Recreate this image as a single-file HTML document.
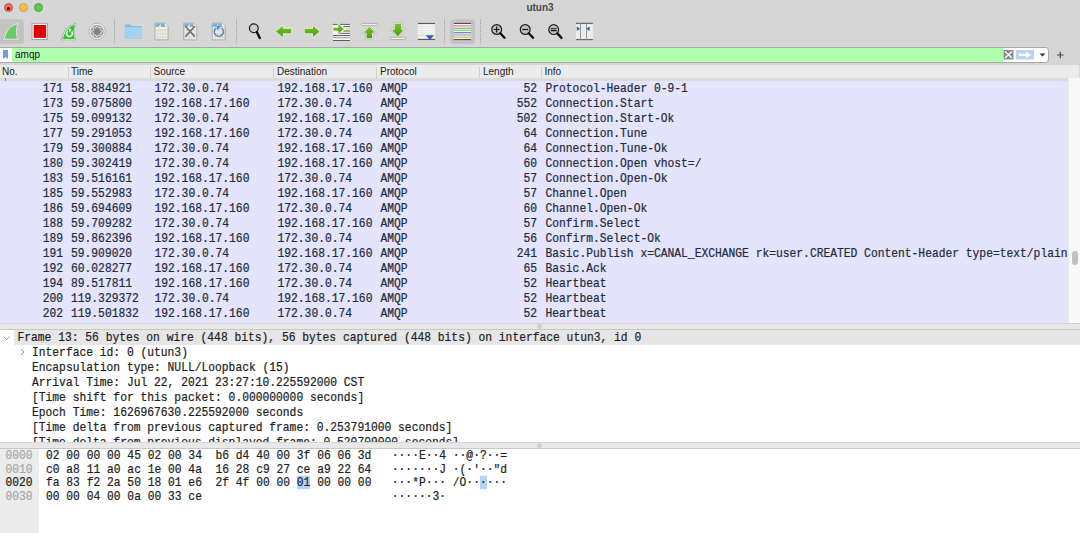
<!DOCTYPE html>
<html><head><meta charset="utf-8">
<style>
*{margin:0;padding:0;box-sizing:border-box}
html,body{width:1080px;height:533px;overflow:hidden;background:#fff}
body{position:relative;font-family:"Liberation Sans",sans-serif}
.abs{position:absolute}
#top{position:absolute;left:0;top:0;width:1080px;height:64px;background:#d6d6d6}
.tl{position:absolute;top:3px;width:9px;height:9px;border-radius:50%}
#title{position:absolute;left:0;width:1080px;top:1.5px;text-align:center;font-size:10px;color:#4a4a4a;font-weight:bold}
#filter{position:absolute;left:0;top:47px;width:1049px;height:16px;border:1px solid #a9a9a9;border-left:none;border-radius:0 4px 4px 0;background:#fff}
#fgreen{position:absolute;left:12px;top:0;width:991px;height:14px;background:#afffaf}
#ftext{position:absolute;left:15px;top:48.5px;font-size:10px;color:#111}
#hdr{position:absolute;left:0;top:63px;width:1080px;border-right:1px solid #d8d8d8;height:15px;background:#ebebeb;border-top:2px solid #d6d6d6}
#hdrb{position:absolute;left:0;top:78px;width:1068px;height:3px;background:#dcdcdc}
#hdr span{position:absolute;top:1px;font-size:10px;color:#222}
.sep{position:absolute;top:2px;width:1px;height:12px;background:#cfcfcf}
#plist{position:absolute;left:0;top:81px;width:1068px;height:242px;background:#e4e4fc}
.r span,.h span,.d i{transform:scaleY(1.13);transform-origin:0 11px}
.d i{display:inline-block;font-style:normal}
.r,.d,.h{-webkit-text-stroke:0.2px currentColor}
.mono{font-family:"Liberation Mono",monospace}
.r{position:absolute;left:0;width:1068px;height:15px;font-family:"Liberation Mono",monospace;font-size:11.3px;line-height:15px;color:#1e2b3a;white-space:pre}
.r span{position:absolute;top:0.7px}
.no{right:1005px;text-align:right}
.tm{left:71px}
.src{left:154.5px}
.dst{left:277.5px}
.pr{left:380.5px}
.ln{right:531px;text-align:right}
.inf{left:545.5px}
#vscroll{position:absolute;left:1068px;top:78px;width:12px;height:245px;background:#f9f9f9;border-left:1px solid #ececec}
#thumb{position:absolute;left:3px;top:173px;width:6px;height:14px;border-radius:3px;background:#c2c2c2}
#split1{position:absolute;left:0;top:323px;width:1080px;height:7px;background:#e8e8e8;border-top:1px solid #d2d2d2;border-bottom:1px solid #c8c8c8}
#details{position:absolute;left:0;top:330px;width:1080px;height:113px;background:#fff;overflow:hidden}
.d{position:absolute;height:15px;padding-top:1px;font-family:"Liberation Mono",monospace;font-size:11.3px;line-height:15px;color:#1e1e1e;white-space:pre}
.d0{left:13.5px;width:1066.5px;background:#e6e6e6;padding-left:4px;padding-top:1px}
.d1{left:32px}
.d2{left:32px}
#split2{position:absolute;left:0;top:442px;width:1080px;height:6.5px;border-top:1px solid #d6d6d6;background:#e8e8e8;border-bottom:1px solid #c8c8c8}
#hexp{position:absolute;left:0;top:449px;width:1080px;height:84px;background:#fff}
#gutter{position:absolute;left:0;top:449px;width:39px;height:84px;background:#ececec}
.h{position:absolute;left:0;width:1080px;height:14px;font-family:"Liberation Mono",monospace;font-size:11.3px;line-height:14px;color:#1e1e1e;white-space:pre}
.h span{position:absolute;top:1.3px}
.off{left:5.4px;color:#a8a8a8}
.off.sel{color:#1e1e1e}
.hx{left:46px}
.asc{left:391.8px}
.h b{font-weight:normal;background:#b3d4fa}
</style></head><body>
<div id="top"></div>
<div class="tl" style="left:3.5px;background:#ec6a5e;border:0.5px solid #d05248"></div><div class="tl" style="left:7px;top:6.5px;width:3px;height:3px;background:#4d0000"></div>
<div class="tl" style="left:18.5px;background:#f4bf4f;border:0.5px solid #d6a13c"></div>
<div class="tl" style="left:33.5px;background:#61c554;border:0.5px solid #4da63f"></div>
<div id="title">utun3</div>

<!-- TOOLBAR -->
<svg class="abs" style="left:0;top:17px" width="600" height="30" viewBox="0 17 600 30">
 <defs>
  <linearGradient id="gg" x1="0" y1="0" x2="0" y2="1"><stop offset="0" stop-color="#7cc52a"/><stop offset="1" stop-color="#4a9c0c"/></linearGradient>
  <g id="doc">
   <path d="M0.5 0.5 H10.3 L13.5 3.7 V17.2 H0.5 Z" fill="#eeeee4" stroke="#a4a49c" stroke-width="0.9"/>
   <path d="M1 1 H10.1 L13 3.9 V4.3 H1 Z" fill="#74b4de"/>
   <path d="M10.3 0.6 V3.7 H13.4 Z" fill="#fafafa"/>
   <path d="M4.6 4.3 C4.8 2.8 5.6 1.8 6.6 1.5 C6.1 2.4 6.1 3.4 6.5 4.3 Z" fill="#f4f4f4"/>
   <g fill="#d4d4ca">
    <rect x="2.5" y="6.5" width="1.6" height="2.2"/><rect x="5" y="6.5" width="1.6" height="2.2"/><rect x="7.5" y="6.5" width="1.6" height="2.2"/><rect x="10" y="6.5" width="1.6" height="2.2"/>
    <rect x="2.5" y="10" width="1.6" height="2.2"/><rect x="5" y="10" width="1.6" height="2.2"/><rect x="7.5" y="10" width="1.6" height="2.2"/><rect x="10" y="10" width="1.6" height="2.2"/>
    <rect x="2.5" y="13.5" width="1.6" height="2.2"/><rect x="5" y="13.5" width="1.6" height="2.2"/><rect x="7.5" y="13.5" width="1.6" height="2.2"/><rect x="10" y="13.5" width="1.6" height="2.2"/>
   </g>
  </g>
 </defs>
 <!-- selected bg -->
 <rect x="-4" y="19" width="27.8" height="24.8" rx="3" fill="#c3c3c3"/>
 <!-- shark fin -->
 <path d="M4.3 39.2 C5.5 31 10.5 25 18.2 23.6 C15.8 28.5 15.8 34.5 18 39.2 Z" fill="#6bcb65" stroke="#ececec" stroke-width="0.9" stroke-linejoin="round"/>
 <!-- stop -->
 <rect x="32" y="23.3" width="15.4" height="16.2" fill="#fbfbfb" stroke="#9c9c9c" stroke-width="0.9"/>
 <rect x="33.7" y="25" width="12.4" height="12.9" fill="#dd0000"/>
 <!-- restart fin -->
 <path d="M61 40.2 C62.2 31.5 67.5 24.5 76.6 22.8 C74.3 28.5 74.3 35 76.5 40.2 Z" fill="#a9a9a9"/>
 <path d="M62.2 39.5 C63.4 31.8 68.2 25.5 75.6 24 C73.6 29 73.6 35 75.5 39.5 Z" fill="#fafafa"/>
 <path d="M63 39 C64.2 32 68.7 26.2 75 24.8 C73.2 29.5 73.2 35 74.9 39 Z" fill="#22cc22"/>
 <path d="M71.6 31.6 A2.9 2.9 0 1 1 68.2 30.9" fill="none" stroke="#f4f4f4" stroke-width="1.6"/>
 <path d="M68.3 28.6 L71.6 28.9 L69.6 32.6 Z" fill="#f4f4f4"/>
 <!-- gear -->
 <circle cx="97.1" cy="31.4" r="8.2" fill="#f0f0f0" stroke="#aaaaaa" stroke-width="0.8"/>
 <circle cx="97.1" cy="31.4" r="6.5" fill="#969696"/>
 <path d="M96.57 26.03 L97.63 26.03 L98.26 27.57 L98.99 27.87 L100.53 27.23 L101.27 27.97 L100.63 29.51 L100.93 30.24 L102.47 30.87 L102.47 31.93 L100.93 32.56 L100.63 33.29 L101.27 34.83 L100.53 35.57 L98.99 34.93 L98.26 35.23 L97.63 36.77 L96.57 36.77 L95.94 35.23 L95.21 34.93 L93.67 35.57 L92.93 34.83 L93.57 33.29 L93.27 32.56 L91.73 31.93 L91.73 30.87 L93.27 30.24 L93.57 29.51 L92.93 27.97 L93.67 27.23 L95.21 27.87 L95.94 27.57 Z" fill="#8c8c8c" stroke="#f2f2f2" stroke-width="0.8" stroke-linejoin="round"/>
 <circle cx="97.1" cy="31.4" r="2.4" fill="#808080"/>
 <!-- sep -->
 <line x1="114.5" y1="19" x2="114.5" y2="43.5" stroke="#a0a0a0" stroke-width="1" stroke-dasharray="1 1"/>
 <!-- folder -->
 <path d="M124.8 24.6 h6 l0.6 1.4 h10.1 v12.8 h-16.7 z" fill="#86bde2"/>
 <rect x="124.8" y="27.2" width="16.7" height="11.6" rx="0.5" fill="#a6d3ec"/>
 <!-- docs -->
 <use href="#doc" x="154.5" y="22.7"/>
 <use href="#doc" x="183.3" y="22.7"/>
 <path d="M185.4 26.3 L194.8 36.6 M194.8 26.3 L185.4 36.6" stroke="#6e6e6e" stroke-width="1.6"/>
 <use href="#doc" x="211.7" y="22.7"/>
 <path d="M221.3 27.8 A4.6 4.6 0 1 1 215.8 28.2" fill="none" stroke="#6486bd" stroke-width="1.6"/>
 <path d="M216.5 25.3 L220.5 27.6 L216.8 30.3 Z" fill="#6486bd"/>
 <!-- sep -->
 <line x1="236.5" y1="19" x2="236.5" y2="43.5" stroke="#a0a0a0" stroke-width="1" stroke-dasharray="1 1"/>
 <!-- find -->
 <circle cx="253.8" cy="28.3" r="4.4" fill="#cdcdcd" stroke="#1a1a1a" stroke-width="1.2"/>
 <path d="M256.8 32 L259.8 38" stroke="#111" stroke-width="2.4" stroke-linecap="round"/>
 <!-- back arrow -->
 <path d="M275.4 31.5 L283.3 24.8 V28.3 H291.7 V33.8 H283.3 V38 Z" fill="url(#gg)" stroke="#eeeeee" stroke-width="0.9" stroke-linejoin="round"/>
 <!-- forward arrow -->
 <path d="M320 31.5 L312.5 24.8 V28.3 H304.2 V33.8 H312.5 V38 Z" fill="url(#gg)" stroke="#eeeeee" stroke-width="0.9" stroke-linejoin="round"/>
 <!-- go to packet -->
 <rect x="333" y="24.4" width="17" height="15.6" fill="#f4f4f4"/>
 <g fill="#5a5e5e"><rect x="333" y="23.9" width="17" height="1"/><rect x="343.3" y="26.1" width="6.7" height="1"/><rect x="343.3" y="30.5" width="6.7" height="1"/><rect x="338" y="32.8" width="12" height="1"/><rect x="333" y="35" width="17" height="1"/><rect x="333" y="40" width="17" height="1"/></g>
 <rect x="333" y="37.2" width="17" height="1" fill="#9a9c9c"/>
 <rect x="345.8" y="28.3" width="3.9" height="1.7" fill="#f0dc30"/>
 <path d="M333 27.2 H338 V23.3 L344.4 29.1 L338 34.4 V31 H333 Z" fill="url(#gg)" stroke="#f6f6f6" stroke-width="0.9" stroke-linejoin="round"/>
 <!-- first packet -->
 <rect x="361.3" y="23.4" width="16.3" height="2" rx="1" fill="#f6f6f6" stroke="#9a9a9a" stroke-width="0.7"/>
 <path d="M369.4 26.3 L375.5 33 H372.5 V38.8 H366.1 V33 H363.2 Z" fill="url(#gg)" stroke="#f2f2f2" stroke-width="0.9" stroke-linejoin="round"/>
 <path d="M369.4 25 L376.8 33.5 H373.2 V39.6 H365.4 V33.5 H362 Z" fill="none" stroke="#b0b0b0" stroke-width="0.5" stroke-linejoin="round"/>
 <!-- last packet -->
 <path d="M394.2 23.3 H401.7 V29.4 H404.4 L397.8 36.9 L391.1 29.4 H394.2 Z" fill="url(#gg)" stroke="#f2f2f2" stroke-width="0.9" stroke-linejoin="round"/>
 <path d="M393.5 22.6 H402.4 V28.8 H405.8 L397.8 37.8 L389.8 28.8 H393.5 Z" fill="none" stroke="#b0b0b0" stroke-width="0.5" stroke-linejoin="round"/>
 <rect x="389.9" y="37.3" width="15.8" height="2.2" rx="1" fill="#f6f6f6" stroke="#9a9a9a" stroke-width="0.7"/>
 <!-- autoscroll -->
 <rect x="417.8" y="23.4" width="17.2" height="16" fill="#e6e6e2"/>
 <g fill="#f8f8f6"><rect x="417.8" y="24.8" width="17.2" height="0.9"/><rect x="417.8" y="27.3" width="17.2" height="0.9"/><rect x="417.8" y="29" width="17.2" height="0.9"/><rect x="417.8" y="30.9" width="17.2" height="0.9"/><rect x="417.8" y="32.9" width="17.2" height="0.9"/><rect x="417.8" y="36.8" width="17.2" height="0.9"/></g>
 <g fill="#575a5a"><rect x="417.8" y="22.9" width="17.2" height="1.1"/><rect x="417.8" y="38.9" width="17.2" height="1.1"/></g>
 <path d="M426 35.2 H433.7 Q434 36.3 432.5 37 L429.9 39.9 L427.3 37 Q425.7 36.3 426 35.2 Z" fill="#2c62b0"/>
 <!-- sep -->
 <line x1="444.5" y1="19" x2="444.5" y2="43.5" stroke="#a0a0a0" stroke-width="1" stroke-dasharray="1 1"/>
 <rect x="450.3" y="19.2" width="24.7" height="24.7" rx="3" fill="#c3c3c3"/>
 <rect x="453.9" y="23" width="17.2" height="17" fill="#f6f6f6"/>
 <rect x="453.9" y="22.9" width="17.2" height="1.1" fill="#4e5252"/>
 <rect x="453.9" y="25" width="17.2" height="1.6" fill="#ee9c9c"/>
 <rect x="453.9" y="27.7" width="17.2" height="1.3" fill="#8cb0da"/>
 <rect x="453.9" y="29.7" width="17.2" height="1.3" fill="#88dd55"/>
 <rect x="453.9" y="32" width="17.2" height="1.3" fill="#6a92cc"/>
 <rect x="453.9" y="34.2" width="17.2" height="1.6" fill="#c0b0c8"/>
 <rect x="453.9" y="36.6" width="17.2" height="1.5" fill="#dcc868"/>
 <rect x="453.9" y="39" width="17.2" height="1.1" fill="#4e5252"/>
 <line x1="480.5" y1="19" x2="480.5" y2="43.5" stroke="#a0a0a0" stroke-width="1" stroke-dasharray="1 1"/>
 <!-- zoom in -->
 <circle cx="496.7" cy="29.5" r="4.9" fill="#c0c0c0" stroke="#1a1a1a" stroke-width="1.2"/>
 <path d="M493.8 29.5 h5.8 M496.7 26.6 v5.8" stroke="#111" stroke-width="1.2"/>
 <path d="M500.3 33.3 L504.5 37.8" stroke="#111" stroke-width="2.4" stroke-linecap="round"/>
 <!-- zoom out -->
 <circle cx="525.2" cy="29.5" r="4.9" fill="#c0c0c0" stroke="#1a1a1a" stroke-width="1.2"/>
 <path d="M522.3 29.5 h5.8" stroke="#111" stroke-width="1.2"/>
 <path d="M528.8 33.3 L533 37.8" stroke="#111" stroke-width="2.4" stroke-linecap="round"/>
 <!-- normal -->
 <circle cx="553.7" cy="29.6" r="4.9" fill="#c0c0c0" stroke="#1a1a1a" stroke-width="1.2"/>
 <path d="M550.8 28.7 h5.8 M550.8 30.6 h5.8" stroke="#111" stroke-width="1.1"/>
 <path d="M557.3 33.4 L561.5 37.9" stroke="#111" stroke-width="2.4" stroke-linecap="round"/>
 <!-- resize cols -->
 <rect x="576" y="23.3" width="16.8" height="16.3" fill="#e8e8e4"/>
 <g fill="#f8f8f6"><rect x="576" y="25.5" width="16.8" height="0.9"/><rect x="576" y="29" width="16.8" height="0.9"/><rect x="576" y="31.5" width="16.8" height="0.9"/><rect x="576" y="34.5" width="16.8" height="0.9"/><rect x="576" y="37" width="16.8" height="0.9"/></g>
 <g fill="#575a5a"><rect x="576" y="22.8" width="16.8" height="1.1"/><rect x="576" y="39.1" width="16.8" height="1.1"/></g>
 <g fill="#8a8c8a"><rect x="580.1" y="23" width="0.9" height="17"/><rect x="586.1" y="23" width="0.9" height="17"/></g>
 <path d="M576.8 26.4 L580.2 28.7 L576.8 31 Z M589.6 26.4 L586.2 28.7 L589.6 31 Z" fill="#2c62b0"/>
</svg>


<!-- FILTER -->
<div id="filter"><div id="fgreen"></div></div>
<svg class="abs" style="left:0;top:47px" width="1080" height="17">
 <path d="M3 3 h5 v9 l-2.5 -2 l-2.5 2 z" fill="#6d9fd6"/>
 <rect x="1003.5" y="3" width="10" height="9.5" fill="#8a8a8a"/>
 <path d="M1005 4.5 L1012 11 M1012 4.5 L1005 11" stroke="#fff" stroke-width="1.2"/>
 <rect x="1016" y="3" width="18" height="9.5" fill="#bcd3ee"/>
 <path d="M1019 7.8 h9" stroke="#fff" stroke-width="2.2"/>
 <path d="M1026 4.5 L1031 7.8 L1026 11 Z" fill="#fff"/>
 <path d="M1039.5 6.5 h6 l-3 3 z" fill="#333"/>
 <path d="M1057 8 h6.5 M1060.25 4.75 v6.5" stroke="#444" stroke-width="1.2"/>
</svg>
<div id="ftext">amqp</div>

<!-- HEADER -->
<div id="hdr">
 <span style="left:2px">No.</span>
 <div class="sep" style="left:67.5px"></div><span style="left:71px">Time</span>
 <div class="sep" style="left:150px"></div><span style="left:153.5px">Source</span>
 <div class="sep" style="left:273px"></div><span style="left:277px">Destination</span>
 <div class="sep" style="left:376px"></div><span style="left:380px">Protocol</span>
 <div class="sep" style="left:479px"></div><span style="left:483px">Length</span>
 <div class="sep" style="left:541px"></div><span style="left:544.5px">Info</span>
</div>

<div id="hdrb"></div>
<div class="abs" style="left:5px;top:78px;width:1px;height:3px;background:#8a8a8a"></div>
<div id="plist"></div>
<div class="r" style="top:81px"><span class="no">171</span><span class="tm">58.884921</span><span class="src">172.30.0.74</span><span class="dst">192.168.17.160</span><span class="pr">AMQP</span><span class="ln">52</span><span class="inf">Protocol-Header 0-9-1</span></div>
<div class="r" style="top:96px"><span class="no">173</span><span class="tm">59.075800</span><span class="src">192.168.17.160</span><span class="dst">172.30.0.74</span><span class="pr">AMQP</span><span class="ln">552</span><span class="inf">Connection.Start</span></div>
<div class="r" style="top:111px"><span class="no">175</span><span class="tm">59.099132</span><span class="src">172.30.0.74</span><span class="dst">192.168.17.160</span><span class="pr">AMQP</span><span class="ln">502</span><span class="inf">Connection.Start-Ok</span></div>
<div class="r" style="top:126px"><span class="no">177</span><span class="tm">59.291053</span><span class="src">192.168.17.160</span><span class="dst">172.30.0.74</span><span class="pr">AMQP</span><span class="ln">64</span><span class="inf">Connection.Tune</span></div>
<div class="r" style="top:141px"><span class="no">179</span><span class="tm">59.300884</span><span class="src">172.30.0.74</span><span class="dst">192.168.17.160</span><span class="pr">AMQP</span><span class="ln">64</span><span class="inf">Connection.Tune-Ok</span></div>
<div class="r" style="top:156px"><span class="no">180</span><span class="tm">59.302419</span><span class="src">172.30.0.74</span><span class="dst">192.168.17.160</span><span class="pr">AMQP</span><span class="ln">60</span><span class="inf">Connection.Open vhost=/</span></div>
<div class="r" style="top:171px"><span class="no">183</span><span class="tm">59.516161</span><span class="src">192.168.17.160</span><span class="dst">172.30.0.74</span><span class="pr">AMQP</span><span class="ln">57</span><span class="inf">Connection.Open-Ok</span></div>
<div class="r" style="top:186px"><span class="no">185</span><span class="tm">59.552983</span><span class="src">172.30.0.74</span><span class="dst">192.168.17.160</span><span class="pr">AMQP</span><span class="ln">57</span><span class="inf">Channel.Open</span></div>
<div class="r" style="top:201px"><span class="no">186</span><span class="tm">59.694609</span><span class="src">192.168.17.160</span><span class="dst">172.30.0.74</span><span class="pr">AMQP</span><span class="ln">60</span><span class="inf">Channel.Open-Ok</span></div>
<div class="r" style="top:216px"><span class="no">188</span><span class="tm">59.709282</span><span class="src">172.30.0.74</span><span class="dst">192.168.17.160</span><span class="pr">AMQP</span><span class="ln">57</span><span class="inf">Confirm.Select</span></div>
<div class="r" style="top:231px"><span class="no">189</span><span class="tm">59.862396</span><span class="src">192.168.17.160</span><span class="dst">172.30.0.74</span><span class="pr">AMQP</span><span class="ln">56</span><span class="inf">Confirm.Select-Ok</span></div>
<div class="r" style="top:246px"><span class="no">191</span><span class="tm">59.909020</span><span class="src">172.30.0.74</span><span class="dst">192.168.17.160</span><span class="pr">AMQP</span><span class="ln">241</span><span class="inf">Basic.Publish x=CANAL_EXCHANGE rk=user.CREATED Content-Header type=text/plain</span></div>
<div class="r" style="top:261px"><span class="no">192</span><span class="tm">60.028277</span><span class="src">192.168.17.160</span><span class="dst">172.30.0.74</span><span class="pr">AMQP</span><span class="ln">65</span><span class="inf">Basic.Ack</span></div>
<div class="r" style="top:276px"><span class="no">194</span><span class="tm">89.517811</span><span class="src">192.168.17.160</span><span class="dst">172.30.0.74</span><span class="pr">AMQP</span><span class="ln">52</span><span class="inf">Heartbeat</span></div>
<div class="r" style="top:291px"><span class="no">200</span><span class="tm">119.329372</span><span class="src">172.30.0.74</span><span class="dst">192.168.17.160</span><span class="pr">AMQP</span><span class="ln">52</span><span class="inf">Heartbeat</span></div>
<div class="r" style="top:306px"><span class="no">202</span><span class="tm">119.501832</span><span class="src">192.168.17.160</span><span class="dst">172.30.0.74</span><span class="pr">AMQP</span><span class="ln">52</span><span class="inf">Heartbeat</span></div>
<div id="vscroll"><div id="thumb"></div></div>
<div id="split1"></div>

<div id="details">
</div>
<div class="d d0" style="top:330px"><i>Frame 13: 56 bytes on wire (448 bits), 56 bytes captured (448 bits) on interface utun3, id 0</i></div>
<div class="d d1" style="top:345px"><i>Interface id: 0 (utun3)</i></div>
<div class="d d2" style="top:360px"><i>Encapsulation type: NULL/Loopback (15)</i></div>
<div class="d d2" style="top:375px"><i>Arrival Time: Jul 22, 2021 23:27:10.225592000 CST</i></div>
<div class="d d2" style="top:390px"><i>[Time shift for this packet: 0.000000000 seconds]</i></div>
<div class="d d2" style="top:405px"><i>Epoch Time: 1626967630.225592000 seconds</i></div>
<div class="d d2" style="top:420px"><i>[Time delta from previous captured frame: 0.253791000 seconds]</i></div>
<div class="d d2" style="top:435px"><i>[Time delta from previous displayed frame: 0.520709000 seconds]</i></div>
<svg class="abs" style="left:0;top:330px" width="40" height="40">
 <path d="M3.5 6.5 L6.5 9.5 L9.5 6.5" fill="none" stroke="#999" stroke-width="1"/>
 <path d="M21 19 L24 22 L21 25" fill="none" stroke="#999" stroke-width="1"/>
</svg>
<div id="split2"></div>
<div id="hexp"></div>
<div class="abs" style="left:537px;top:324px;width:5px;height:5px;border-radius:50%;background:#d0d0d0"></div>
<div class="abs" style="left:537px;top:443px;width:5px;height:5px;border-radius:50%;background:#d0d0d0"></div>
<div id="gutter"></div>
<div class="h" style="top:448.0px"><span class="off">0000</span><span class="hx">02 00 00 00 45 02 00 34  b6 d4 40 00 3f 06 06 3d</span><span class="asc">····E··4 ··@·?··=</span></div>
<div class="h" style="top:461.5px"><span class="off">0010</span><span class="hx">c0 a8 11 a0 ac 1e 00 4a  16 28 c9 27 ce a9 22 64</span><span class="asc">·······J ·(·&#x27;··&quot;d</span></div>
<div class="h" style="top:475.0px"><span class="off sel">0020</span><span class="hx">fa 83 f2 2a 50 18 01 e6  2f 4f 00 00 <b>01</b> 00 00 00</span><span class="asc">···*P··· /O··<b>·</b>···</span></div>
<div class="h" style="top:488.5px"><span class="off">0030</span><span class="hx">00 00 04 00 0a 00 33 ce</span><span class="asc">······3·</span></div>
</body></html>
